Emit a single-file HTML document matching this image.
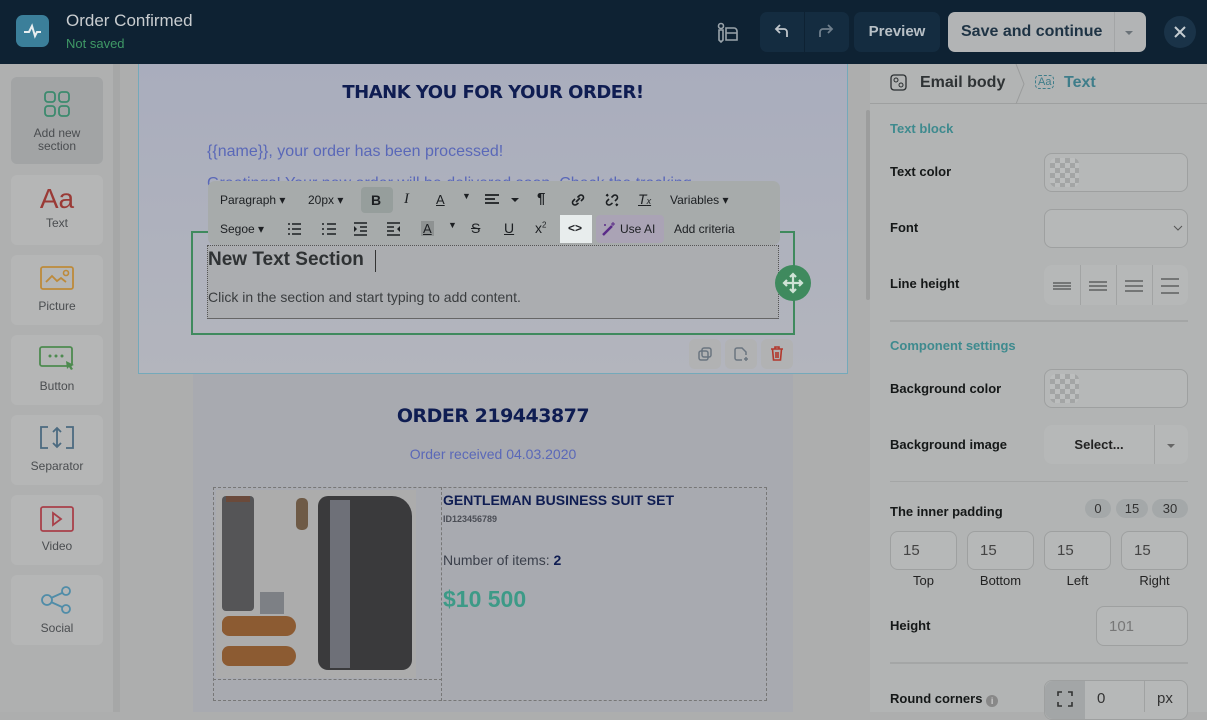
<!DOCTYPE html>
<html><head><meta charset="utf-8"><style>
*{box-sizing:border-box;margin:0;padding:0}
body{width:1207px;height:712px;overflow:hidden;font-family:"Liberation Sans",sans-serif;background:#adaeae;position:relative}
.abs{position:absolute}
.hdr{left:0;top:0;width:1207px;height:64px;background:#0e2233}
.side{left:0;top:64px;width:113px;height:648px;background:#afb0b0}
.card{position:absolute;left:11px;width:92px;height:70px;background:#b5b6b6;border-radius:6px;text-align:center;font-size:12px;color:#4a4d50}
.card svg{display:block;margin:10px auto 2px}
.rp{left:870px;top:64px;width:337px;height:648px;background:#b2b4b4}
.lbl{position:absolute;left:890px;font-size:13px;font-weight:bold;color:#151818}
.sec{position:absolute;left:890px;font-size:13px;font-weight:bold;color:#3e8a8e}
.inp{position:absolute;border:1px solid #9ea0a0;border-radius:8px;background:#b6b8b8}
.tb{font-size:12px;color:#1c1f22}
.hv{font-family:"DejaVu Sans",sans-serif;font-weight:bold;color:#0f1d52;letter-spacing:-0.5px}
</style></head><body>
<div class="abs hdr"></div>
<div class="abs" style="left:16px;top:15px;width:33px;height:32px;border-radius:7px;background:#3b7f9a">
<svg width="33" height="32"><path d="M8 17h5l3-6 3 10 2-4h4" stroke="#e8eef0" stroke-width="2" fill="none"/></svg></div>
<div class="abs" style="left:66px;top:11px;font-size:17px;color:#c9cdd0">Order Confirmed</div>
<div class="abs" style="left:66px;top:36px;font-size:13px;color:#3f9966">Not saved</div>
<svg class="abs" style="left:716px;top:22px" width="24" height="22"><circle cx="5" cy="4" r="2.5" stroke="#9aa4ab" stroke-width="1.6" fill="none"/><path d="M3 8v10l2 2 2-2V8zM10 6h8a3 3 0 013 3v9H10zM10 11h11" stroke="#9aa4ab" stroke-width="1.6" fill="none"/></svg>
<div class="abs" style="left:760px;top:12px;width:89px;height:40px;background:#142c40;border-radius:7px"></div>
<div class="abs" style="left:804px;top:12px;width:1px;height:40px;background:#0e2233"></div>
<svg class="abs" style="left:773px;top:23px" width="18" height="16"><path d="M14 14V9a3 3 0 00-3-3H3M7 2L3 6l4 4" stroke="#c0c6cb" stroke-width="1.8" fill="none"/></svg>
<svg class="abs" style="left:817px;top:23px" width="18" height="16"><path d="M3 14V9a3 3 0 013-3h9M11 2l4 4-4 4" stroke="#6f7f8c" stroke-width="1.8" fill="none"/></svg>
<div class="abs" style="left:854px;top:12px;width:86px;height:40px;background:#142c40;border-radius:7px;color:#b8c0c6;font-size:15px;font-weight:bold;text-align:center;line-height:40px">Preview</div>
<div class="abs" style="left:948px;top:12px;width:198px;height:40px;background:#b2b4b5;border-radius:7px"></div>
<div class="abs" style="left:1114px;top:12px;width:1px;height:40px;background:#a3a5a6"></div>
<div class="abs" style="left:961px;top:12px;line-height:40px;font-size:16px;font-weight:bold;color:#1e3344">Save and continue</div>
<div class="abs" style="left:1125px;top:31px;border:4px solid transparent;border-top-color:#6a7278"></div>
<div class="abs" style="left:1164px;top:16px;width:32px;height:32px;border-radius:50%;background:#1a3348"></div>
<svg class="abs" style="left:1173px;top:25px" width="14" height="14"><path d="M2 2l10 10M12 2L2 12" stroke="#c5ccd1" stroke-width="2"/></svg>

<div class="abs side"></div>
<div class="abs" style="left:113px;top:64px;width:7px;height:648px;background:#a6a7a7"></div>
<div class="card" style="top:77px;height:87px;background:#a2a4a5">
<svg width="28" height="28" style="margin-top:13px"><g stroke="#3c8a6e" stroke-width="1.8" fill="none"><rect x="2" y="2" width="10" height="10" rx="3"/><rect x="16" y="2" width="10" height="10" rx="3"/><rect x="2" y="16" width="10" height="10" rx="3"/><rect x="16" y="16" width="10" height="10" rx="3"/></g></svg>
<div style="line-height:13px;margin-top:9px">Add new<br>section</div></div>
<div class="card" style="top:175px"><div style="font-size:28px;color:#9a3a36;margin-top:9px;line-height:30px">Aa</div><div style="margin-top:2px">Text</div></div>
<div class="card" style="top:255px"><svg width="36" height="28"><rect x="2" y="2" width="32" height="22" rx="2" stroke="#bd8a3a" stroke-width="1.8" fill="none"/><path d="M7 17l6-6 5 5 4-3 5 4" stroke="#bd8a3a" stroke-width="1.8" fill="none"/><circle cx="27" cy="8" r="2.5" stroke="#bd8a3a" stroke-width="1.6" fill="none"/></svg><div style="margin-top:6px">Picture</div></div>
<div class="card" style="top:335px"><svg width="38" height="28"><rect x="2" y="2" width="32" height="19" rx="2" stroke="#4d8a4f" stroke-width="1.8" fill="none"/><circle cx="12" cy="11" r="1.5" fill="#4d8a4f"/><circle cx="18" cy="11" r="1.5" fill="#4d8a4f"/><circle cx="24" cy="11" r="1.5" fill="#4d8a4f"/><path d="M28 16l8 4-3 1 2 3-2 1-2-3-2 2z" fill="#4d8a4f"/></svg><div style="margin-top:6px">Button</div></div>
<div class="card" style="top:415px"><svg width="38" height="28"><path d="M10 2H3v21h7M28 2h7v21h-7M19 3v19M15 7l4-4 4 4M15 18l4 4 4-4" stroke="#4b6a80" stroke-width="1.8" fill="none"/></svg><div style="margin-top:6px">Separator</div></div>
<div class="card" style="top:495px"><svg width="36" height="28"><rect x="2" y="2" width="32" height="24" rx="2" stroke="#a8404a" stroke-width="1.8" fill="none"/><path d="M14 8l8 6-8 6z" stroke="#a8404a" stroke-width="1.8" fill="none"/></svg><div style="margin-top:6px">Video</div></div>
<div class="card" style="top:575px"><svg width="34" height="30"><g stroke="#4f8ca8" stroke-width="1.8" fill="none"><circle cx="7" cy="15" r="5"/><circle cx="26" cy="6" r="4"/><circle cx="26" cy="24" r="4"/><path d="M11 13l11-5M11 17l11 5"/></g></svg><div style="margin-top:6px">Social</div></div>

<!-- canvas -->
<div class="abs" style="left:193px;top:374px;width:600px;height:338px;background:#a8aab0"></div>
<div class="abs" style="left:138px;top:64px;width:710px;height:310px;background:linear-gradient(#a9adbd,#b3b5bd);border:1.5px solid #74a9ba;border-top:none"></div>
<div class="abs" style="left:866px;top:110px;width:4px;height:190px;background:#9c9d9d;border-radius:2px"></div>
<div class="abs hv" style="left:138px;top:82px;width:710px;text-align:center;font-size:18px">THANK YOU FOR YOUR ORDER!</div>
<div class="abs" style="left:207px;top:143px;font-size:16px;color:#5a68b8">{{name}}, your order has been processed!</div>
<div class="abs" style="left:207px;top:175px;font-size:16px;color:#5a68b8">Greetings! Your new order will be delivered soon. Check the tracking</div>

<div class="abs" style="left:191px;top:231px;width:604px;height:104px;border:2px solid #3f8a5e"></div>
<div class="abs" style="left:207px;top:245px;width:572px;height:74px;border:1px dotted #555;border-bottom:1px solid #666;background:#abadb0"></div>
<div class="abs" style="left:208px;top:249px;font-size:19px;font-weight:bold;color:#2f3234">New Text Section</div>
<div class="abs" style="left:375px;top:250px;width:1px;height:22px;background:#333"></div>
<div class="abs" style="left:208px;top:289px;font-size:14px;color:#3a3d3f">Click in the section and start typing to add content.</div>
<div class="abs" style="left:775px;top:265px;width:36px;height:36px;border-radius:50%;background:#3f8a5e"></div>
<svg class="abs" style="left:781px;top:271px" width="24" height="24"><path d="M12 3v18M3 12h18M9 6l3-3 3 3M9 18l3 3 3-3M6 9l-3 3 3 3M18 9l3 3-3 3" stroke="#cfe3d6" stroke-width="2.2" fill="none"/></svg>

<div class="abs" style="left:208px;top:181px;width:572px;height:64px;background:#a7abab;border-radius:7px"></div>
<div class="abs" style="left:361px;top:187px;width:32px;height:26px;background:#969e9c;border-radius:4px"></div>
<div class="abs" style="left:560px;top:215px;width:32px;height:28px;background:#e8eded"></div>
<div class="abs" style="left:596px;top:215px;width:68px;height:28px;background:#aaa3b5;border-radius:4px"></div>
<div class="abs tb" style="left:220px;top:193px">Paragraph ▾</div>
<div class="abs tb" style="left:308px;top:193px">20px ▾</div>
<div class="abs tb" style="left:371px;top:192px;font-weight:bold;font-size:14px">B</div>
<div class="abs tb" style="left:404px;top:191px;font-style:italic;font-size:15px;font-family:'Liberation Serif',serif">I</div>
<div class="abs tb" style="left:436px;top:192px;font-size:13px;text-decoration:underline">A</div>
<div class="abs tb" style="left:462px;top:191px;font-size:9px">▼</div>
<svg class="abs" style="left:484px;top:193px" width="40" height="14"><path d="M1 2h14M1 6h10M1 10h14" stroke="#1c1f22" stroke-width="1.8"/><path d="M27 5l4 4 4-4z" fill="#1c1f22"/></svg>
<div class="abs tb" style="left:537px;top:190px;font-size:15px;font-weight:bold">¶</div>
<svg class="abs" style="left:570px;top:192px" width="16" height="16"><path d="M6 10l4-4M5 7L3 9a2.5 2.5 0 003.5 3.5L8.5 11M11 9l2-2A2.5 2.5 0 009.5 3.5L7.5 5.5" stroke="#1c1f22" stroke-width="1.6" fill="none"/></svg>
<svg class="abs" style="left:604px;top:192px" width="16" height="16"><path d="M5 7L3 9a2.5 2.5 0 003.5 3.5L8.5 11M11 9l2-2A2.5 2.5 0 009.5 3.5L7.5 5.5M2 3l2 1M3 2l1 2M14 13l-2-1M13 14l-1-2" stroke="#1c1f22" stroke-width="1.6" fill="none"/></svg>
<div class="abs tb" style="left:638px;top:191px;font-size:14px;font-style:italic;text-decoration:underline">T<span style="font-size:9px">x</span></div>
<div class="abs tb" style="left:670px;top:193px">Variables ▾</div>
<div class="abs tb" style="left:220px;top:222px">Segoe ▾</div>
<svg class="abs" style="left:287px;top:222px" width="120" height="14"><g stroke="#1c1f22" stroke-width="1.6"><path d="M1 2h2M1 7h2M1 12h2M5 2h9M5 7h9M5 12h9"/><path d="M35 2h2M35 7h2M35 12h2M40 2h9M40 7h9M40 12h9"/><path d="M67 1h13M73 5h7M73 9h7M67 13h13"/><path d="M100 1h13M100 5h7M100 9h7M100 13h13"/></g><path d="M67 4l3 3-3 3zM113 4l-3 3 3 3z" fill="#1c1f22"/></svg>
<div class="abs tb" style="left:421px;top:221px;font-size:13px;background:#8e9292;padding:0 2px;text-decoration:underline">A</div>
<div class="abs tb" style="left:448px;top:220px;font-size:9px">▼</div>
<div class="abs tb" style="left:471px;top:220px;font-size:14px;text-decoration:line-through">S</div>
<div class="abs tb" style="left:504px;top:220px;font-size:14px;text-decoration:underline">U</div>
<div class="abs tb" style="left:535px;top:220px;font-size:14px">x<sup style="font-size:8px">2</sup></div>
<div class="abs tb" style="left:568px;top:221px;font-size:12px;font-weight:bold">&lt;&gt;</div>
<svg class="abs" style="left:601px;top:221px" width="16" height="16"><path d="M2 14L11 5" stroke="#5a2a88" stroke-width="2.5"/><path d="M12 1v4M10 3h4M4 3v2M3 4h2" stroke="#5a2a88" stroke-width="1"/></svg>
<div class="abs tb" style="left:620px;top:222px">Use AI</div>
<div class="abs tb" style="left:674px;top:222px">Add criteria</div>

<div class="abs" style="left:689px;top:339px;width:32px;height:30px;background:#b1b2b3;border-radius:6px"></div>
<div class="abs" style="left:725px;top:339px;width:32px;height:30px;background:#b1b2b3;border-radius:6px"></div>
<div class="abs" style="left:761px;top:339px;width:32px;height:30px;background:#b1b2b3;border-radius:6px"></div>
<svg class="abs" style="left:697px;top:346px" width="16" height="16"><rect x="5" y="2" width="9" height="9" rx="2" stroke="#6a7580" stroke-width="1.5" fill="none"/><rect x="2" y="5" width="9" height="9" rx="2" stroke="#6a7580" stroke-width="1.5" fill="none"/></svg>
<svg class="abs" style="left:733px;top:346px" width="16" height="16"><path d="M9 14H4a2 2 0 01-2-2V4a2 2 0 012-2h5l4 4v3M13 11v4M11 13h4" stroke="#6a7580" stroke-width="1.5" fill="none"/></svg>
<svg class="abs" style="left:769px;top:345px" width="16" height="17"><path d="M2 4h12M6 4V2h4v2M3.5 4l1 11h7l1-11M7 7v6M9 7v6" stroke="#b2382c" stroke-width="1.6" fill="none"/></svg>

<div class="abs hv" style="left:193px;top:405px;width:600px;text-align:center;font-size:19px">ORDER 219443877</div>
<div class="abs" style="left:193px;top:446px;width:600px;text-align:center;font-size:14px;color:#5a68b8">Order received 04.03.2020</div>
<div class="abs" style="left:213px;top:487px;width:554px;height:214px;border:1px dashed #777"></div>
<div class="abs" style="left:213px;top:487px;width:229px;height:214px;border-right:1px dashed #777"></div>
<div class="abs" style="left:213px;top:679px;width:229px;border-top:1px dashed #777"></div>
<div class="abs" style="left:216px;top:490px;width:200px;height:188px;background:#acacac"></div>
<div class="abs" style="left:222px;top:496px;width:32px;height:115px;background:#555557;border-radius:4px"></div>
<div class="abs" style="left:226px;top:496px;width:24px;height:6px;background:#6b4a3a"></div>
<div class="abs" style="left:296px;top:498px;width:12px;height:32px;background:#6e5a46;border-radius:5px"></div>
<div class="abs" style="left:318px;top:496px;width:94px;height:174px;background:#3a3a3c;border-radius:10px 20px 10px 10px"></div>
<div class="abs" style="left:330px;top:500px;width:20px;height:168px;background:#6e7078"></div>
<div class="abs" style="left:222px;top:624px;width:30px;height:10px;background:#6b4a3a;border-radius:4px"></div>
<div class="abs" style="left:260px;top:592px;width:24px;height:22px;background:#7d8085"></div>
<div class="abs" style="left:222px;top:620px;width:74px;height:20px;background:#8c5b32;border-radius:10px 14px 14px 10px;top:616px"></div>
<div class="abs" style="left:222px;top:646px;width:74px;height:20px;background:#8c5b32;border-radius:10px 14px 14px 10px"></div>
<div class="abs" style="left:443px;top:492px;font-size:14px;font-weight:bold;color:#0f1d52">GENTLEMAN BUSINESS SUIT SET</div>
<div class="abs" style="left:443px;top:514px;font-size:9px;font-weight:bold;color:#4a4d55">ID123456789</div>
<div class="abs" style="left:443px;top:552px;font-size:14px;color:#3a3f4a">Number of items: <b style="color:#0f1d52">2</b></div>
<div class="abs" style="left:443px;top:586px;font-size:23px;font-weight:bold;color:#3d9a87">$10 500</div>

<!-- right panel -->
<div class="abs rp"></div>
<div class="abs" style="left:870px;top:103px;width:337px;height:1px;background:#9ea0a0"></div>
<svg class="abs" style="left:890px;top:74px" width="18" height="18"><rect x="1" y="1" width="15" height="15" rx="3" stroke="#2a2e30" stroke-width="1.3" fill="none"/><circle cx="6" cy="6" r="2" stroke="#2a2e30" fill="none"/><circle cx="11" cy="11" r="2" stroke="#2a2e30" fill="none"/></svg>
<div class="abs" style="left:920px;top:74px;font-size:16px;font-weight:bold;color:#2f3335">Email body</div>
<svg class="abs" style="left:1014px;top:64px" width="12" height="40"><path d="M2 0l8 20-8 20" stroke="#9a9c9c" fill="none"/></svg>
<div class="abs" style="left:1035px;top:75px;font-size:11px;color:#3e7d8a;border:1px dashed #3e7d8a;border-radius:4px;padding:0 2px">Aa</div>
<div class="abs" style="left:1064px;top:74px;font-size:16px;font-weight:bold;color:#3e7d8a">Text</div>
<div class="sec" style="top:121px">Text block</div>
<div class="lbl" style="top:164px">Text color</div>
<div class="inp" style="left:1044px;top:153px;width:144px;height:39px"></div>
<div class="abs" style="left:1050px;top:158px;width:29px;height:29px;border-radius:6px;background:repeating-conic-gradient(#a3a5a5 0 25%,#bcbebe 0 50%) 0 0/10px 10px"></div>
<div class="lbl" style="top:220px">Font</div>
<div class="inp" style="left:1044px;top:209px;width:144px;height:39px"></div>
<svg class="abs" style="left:1173px;top:224px" width="10" height="8"><path d="M1 2l4 4 4-4" stroke="#555" fill="none"/></svg>
<div class="lbl" style="top:276px">Line height</div>
<div class="abs" style="left:1044px;top:265px;width:144px;height:40px;background:#b6b8b8;border-radius:8px"></div>
<div class="abs" style="left:1080px;top:265px;width:1px;height:40px;background:#a2a4a4"></div>
<div class="abs" style="left:1116px;top:265px;width:1px;height:40px;background:#a2a4a4"></div>
<div class="abs" style="left:1152px;top:265px;width:1px;height:40px;background:#a2a4a4"></div>
<svg class="abs" style="left:1044px;top:265px" width="144" height="40"><g stroke="#333" stroke-width="1"><path d="M9 18h18M9 21h18M9 24h18M45 17h18M45 21h18M45 25h18M81 16h18M81 21h18M81 26h18M117 14h18M117 21h18M117 28h18"/></g></svg>
<div class="abs" style="left:890px;top:320px;width:298px;height:2px;background:#a4a6a6"></div>
<div class="sec" style="top:338px">Component settings</div>
<div class="lbl" style="top:381px">Background color</div>
<div class="inp" style="left:1044px;top:369px;width:144px;height:39px"></div>
<div class="abs" style="left:1050px;top:374px;width:29px;height:29px;border-radius:6px;background:repeating-conic-gradient(#a3a5a5 0 25%,#bcbebe 0 50%) 0 0/10px 10px"></div>
<div class="lbl" style="top:437px">Background image</div>
<div class="abs" style="left:1044px;top:425px;width:144px;height:39px;background:#b6b8b8;border-radius:8px"></div>
<div class="abs" style="left:1154px;top:425px;width:1px;height:39px;background:#a2a4a4"></div>
<div class="abs" style="left:1044px;top:437px;width:110px;text-align:center;font-size:13px;font-weight:bold;color:#222">Select...</div>
<div class="abs" style="left:1167px;top:444px;border:4px solid transparent;border-top-color:#666"></div>
<div class="abs" style="left:890px;top:481px;width:298px;height:1px;background:#a4a6a6"></div>
<div class="lbl" style="top:504px">The inner padding</div>
<div class="abs" style="left:1085px;top:499px;width:26px;height:19px;background:#a4a8a9;border-radius:10px;text-align:center;font-size:13px;line-height:19px;color:#333">0</div>
<div class="abs" style="left:1116px;top:499px;width:32px;height:19px;background:#a4a8a9;border-radius:10px;text-align:center;font-size:13px;line-height:19px;color:#333">15</div>
<div class="abs" style="left:1152px;top:499px;width:36px;height:19px;background:#a4a8a9;border-radius:10px;text-align:center;font-size:13px;line-height:19px;color:#333">30</div>
<div class="inp" style="left:890px;top:531px;width:67px;height:39px;font-size:15px;color:#444;padding:10px 12px">15</div>
<div class="inp" style="left:967px;top:531px;width:67px;height:39px;font-size:15px;color:#444;padding:10px 12px">15</div>
<div class="inp" style="left:1044px;top:531px;width:67px;height:39px;font-size:15px;color:#444;padding:10px 12px">15</div>
<div class="inp" style="left:1121px;top:531px;width:67px;height:39px;font-size:15px;color:#444;padding:10px 12px">15</div>
<div class="abs" style="left:890px;top:573px;width:67px;text-align:center;font-size:13px;color:#222">Top</div>
<div class="abs" style="left:967px;top:573px;width:67px;text-align:center;font-size:13px;color:#222">Bottom</div>
<div class="abs" style="left:1044px;top:573px;width:67px;text-align:center;font-size:13px;color:#222">Left</div>
<div class="abs" style="left:1121px;top:573px;width:67px;text-align:center;font-size:13px;color:#222">Right</div>
<div class="lbl" style="top:618px">Height</div>
<div class="inp" style="left:1096px;top:606px;width:92px;height:40px;font-size:15px;color:#777;padding:11px 12px">101</div>
<div class="abs" style="left:890px;top:662px;width:298px;height:2px;background:#a4a6a6"></div>
<div class="lbl" style="top:691px">Round corners <span style="display:inline-block;width:12px;height:12px;border-radius:50%;background:#888;color:#ccc;font-size:9px;text-align:center;line-height:12px;vertical-align:-1px">i</span></div>
<div class="inp" style="left:1044px;top:680px;width:144px;height:40px"></div>
<div class="abs" style="left:1045px;top:681px;width:40px;height:38px;background:#a3a6a7;border-radius:8px 0 0 8px"></div>
<svg class="abs" style="left:1057px;top:691px" width="16" height="16"><path d="M1 5V1h4M11 1h4v4M15 11v4h-4M5 15H1v-4" stroke="#333" stroke-width="1.6" fill="none"/></svg>
<div class="abs" style="left:1144px;top:681px;width:1px;height:31px;background:#a0a2a2"></div>
<div class="abs" style="left:1097px;top:690px;font-size:15px;color:#333">0</div>
<div class="abs" style="left:1157px;top:690px;font-size:15px;color:#333">px</div>
</body></html>
